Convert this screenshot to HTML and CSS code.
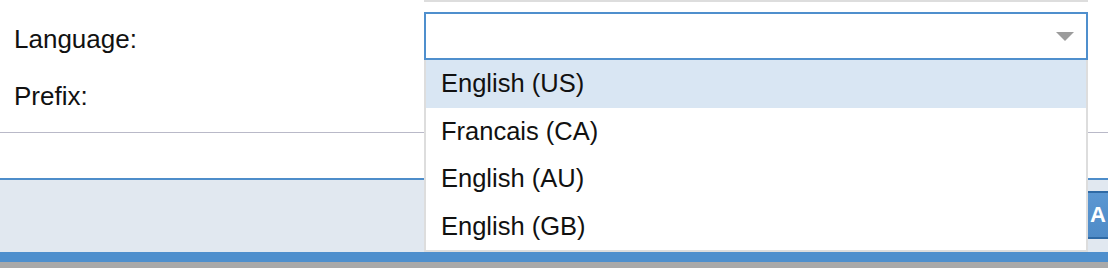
FILE: index.html
```html
<!DOCTYPE html>
<html lang="en">
<head>
<meta charset="utf-8">
<title>Language settings</title>
<link rel="stylesheet" href="styles.css">
</head>
<body>
<div class="page">
  <div class="form">
    <div class="label label-lang">Language:</div>
    <div class="field">
      <div class="field-prev"></div>
      <div class="select">
        <span class="select-value"></span>
        <span class="select-arrow"></span>
      </div>
    </div>
    <div class="label label-prefix">Prefix:</div>
    <div class="field"></div>
  </div>
  <div class="gap"></div>
  <div class="footer">
    <div class="footer-space"></div>
    <button class="btn" type="button">A</button>
  </div>
  <div class="bar-blue"></div>
  <div class="bar-gray"></div>

  <ul class="dropdown">
    <li class="option is-active">English (US)</li>
    <li class="option">Francais (CA)</li>
    <li class="option">English (AU)</li>
    <li class="option">English (GB)</li>
  </ul>
</div>
</body>
</html>
```

FILE: styles.css
```css
html, body {
  margin: 0;
  padding: 0;
  background: #ffffff;
  overflow: hidden;
}

body {
  font-family: "Liberation Sans", Arial, Helvetica, sans-serif;
  color: #111111;
}

.page {
  position: relative;
  width: 1108px;
  height: 268px;
  overflow: hidden;
}

.form {
  display: grid;
  grid-template-columns: 424px 664px;
  grid-template-rows: 56px 76px;
  border-bottom: 1px solid #b9b9c8;
}

.label {
  font-size: 26px;
  line-height: 30px;
  padding-left: 14px;
}

.label-lang {
  padding-top: 24px;
}

.label-prefix {
  padding-top: 25px;
}

.field-prev {
  height: 2px;
  background: #dddddd;
}

.select {
  margin-top: 10px;
  height: 44px;
  border: 2px solid #4f8fcd;
  background: #ffffff;
  display: flex;
  align-items: center;
  justify-content: flex-end;
  padding-right: 12px;
}

.select-arrow {
  width: 0;
  height: 0;
  border-left: 9px solid transparent;
  border-right: 9px solid transparent;
  border-top: 9px solid #9c9c9c;
  margin-top: 1px;
}

.gap {
  height: 45px;
}

.footer {
  display: grid;
  grid-template-columns: 1078px 30px;
  border-top: 2px solid #4d8dca;
  background: #e1e8f0;
  height: 74px;
  box-sizing: border-box;
  padding-top: 11px;
}

.btn {
  height: 48px;
  padding: 0 0 0 12px;
  border: 0;
  border-top: 2px solid #2f6aa5;
  border-bottom: 2px solid #2f6aa5;
  background: linear-gradient(#5b97d2, #4f8bc7);
  color: #ffffff;
  font-family: "Liberation Sans", Arial, sans-serif;
  font-weight: bold;
  font-size: 22px;
  text-align: left;
  white-space: nowrap;
}

.bar-blue {
  height: 10px;
  background: #4e8fcd;
}

.bar-gray {
  height: 6px;
  background: #a9a9a9;
}

.dropdown {
  position: absolute;
  top: 60px;
  left: 424px;
  width: 664px;
  box-sizing: border-box;
  margin: 0;
  padding: 0;
  list-style: none;
  background: #ffffff;
  border: 2px solid #dddddd;
  border-top: 0;
}

.option {
  height: 47.5px;
  display: flex;
  align-items: center;
  padding-left: 15px;
  font-size: 25.5px;
  color: #111111;
}

.option.is-active {
  background: #d9e6f3;
}
```
